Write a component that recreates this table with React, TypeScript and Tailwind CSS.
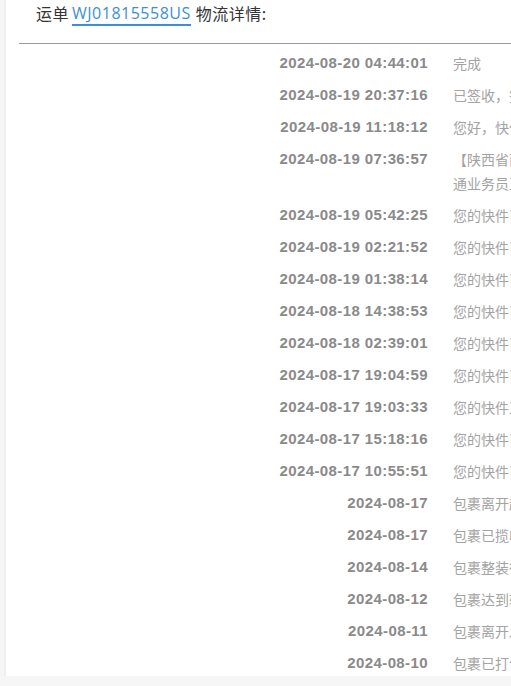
const rows: { time: string; desc: string[] }[] = [
  { time: "2024-08-20 04:44:01", desc: ["完成"] },
  { time: "2024-08-19 20:37:16", desc: ["已签收，签收人凭取货码签收。"] },
  { time: "2024-08-19 11:18:12", desc: ["您好，快件已到达驿站，请凭取货码取件"] },
  { time: "2024-08-19 07:36:57", desc: ["【陕西省西安市】快件已到达西安营业部", "通业务员正在派件"] },
  { time: "2024-08-19 05:42:25", desc: ["您的快件已到达西安转运中心"] },
  { time: "2024-08-19 02:21:52", desc: ["您的快件已离开郑州转运中心"] },
  { time: "2024-08-19 01:38:14", desc: ["您的快件已到达郑州转运中心"] },
  { time: "2024-08-18 14:38:53", desc: ["您的快件已离开上海转运中心"] },
  { time: "2024-08-18 02:39:01", desc: ["您的快件已到达上海转运中心"] },
  { time: "2024-08-17 19:04:59", desc: ["您的快件已完成清关"] },
  { time: "2024-08-17 19:03:33", desc: ["您的快件正在清关"] },
  { time: "2024-08-17 15:18:16", desc: ["您的快件已到达海关监管仓"] },
  { time: "2024-08-17 10:55:51", desc: ["您的快件已到达目的国"] },
  { time: "2024-08-17", desc: ["包裹离开起运国机场"] },
  { time: "2024-08-17", desc: ["包裹已揽收"] },
  { time: "2024-08-14", desc: ["包裹整装待发"] },
  { time: "2024-08-12", desc: ["包裹达到转运仓"] },
  { time: "2024-08-11", desc: ["包裹离开发货地"] },
  { time: "2024-08-10", desc: ["包裹已打包"] },
];

export default function App() {
  return (
    <div className="h-[686px] w-[511px] overflow-hidden bg-[#f6f6f6]">
      <div className="ml-[4px] h-[676px] overflow-hidden border-l-2 border-[#efefef] bg-white">
        {/* Header */}
        <div className="flex h-[28px] items-start pl-[30px] pt-[2px] text-[16px] leading-[22px] tracking-[0.5px] text-[#333] [font-family:'Noto_Sans_CJK_SC','Open_Sans',sans-serif]">
          <span>运单</span>
          <a className="ml-[3px] mr-[5px] border-b-2 border-[#3c8fd6] text-[#3c8fd6] [font-family:'Open_Sans','Noto_Sans_CJK_SC',sans-serif]">
            WJ01815558US
          </a>
          <span>物流详情:</span>
        </div>

        <div className="ml-[13px] mt-[15px] border-t border-[#9a9a9a]" />

        {/* Rows */}
        <div className="pt-[3px]">
          {rows.map((r, i) => (
            <div key={i} className="flex py-[4px] leading-[24px]">
              <div className="w-[422px] shrink-0 text-right text-[15px] font-bold tracking-[0.4px] text-[#8a8a8a] [font-family:'Liberation_Sans',Arial,sans-serif]">
                {r.time}
              </div>
              <div className="shrink-0 whitespace-nowrap pl-[25px] text-[14px] text-[#a3a3a3] [font-family:'Noto_Sans_CJK_SC',sans-serif]">
                {r.desc.map((line, j) => (
                  <div key={j}>{line}</div>
                ))}
              </div>
            </div>
          ))}
        </div>
      </div>
    </div>
  );
}
